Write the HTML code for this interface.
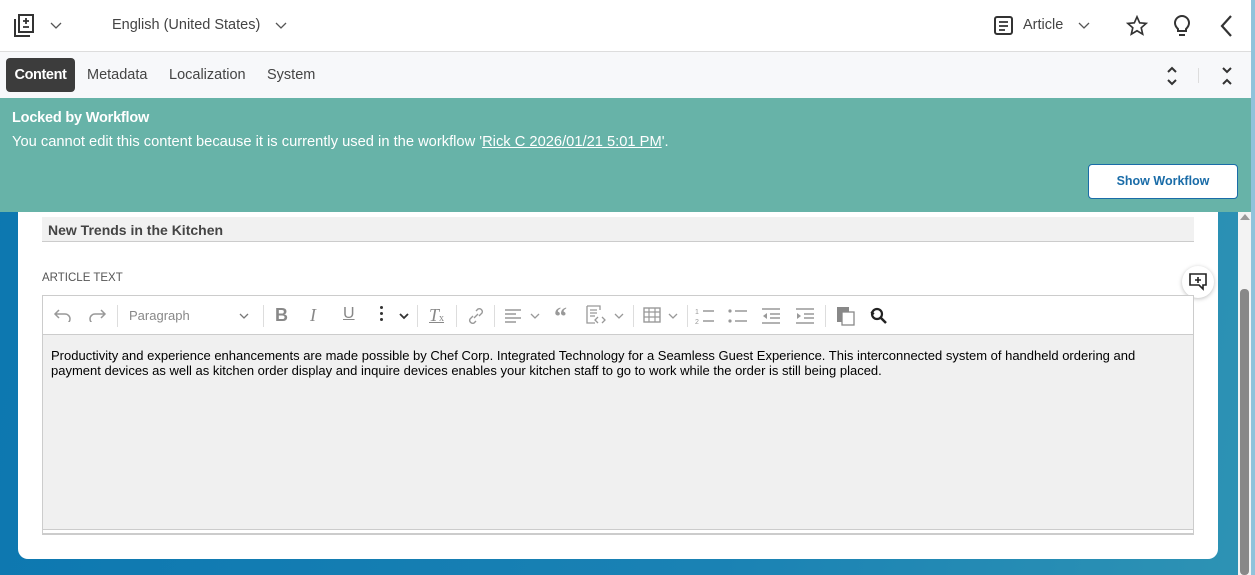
<!DOCTYPE html>
<html><head><meta charset="utf-8"><style>
*{box-sizing:border-box;margin:0;padding:0}
body{width:1255px;height:575px;overflow:hidden;position:relative;font-family:"Liberation Sans",sans-serif;background:linear-gradient(100deg,#0c77b0 0%,#1a82b4 60%,#2e93b4 100%)}
.abs{position:absolute}
.top{left:0;top:0;width:1251px;height:52px;background:#fff;border-bottom:1px solid #ddd}
.tabs{left:0;top:52px;width:1251px;height:46px;background:#f7f8fa}
.banner{left:0;top:98px;width:1251px;height:114px;background:#67b3a8;color:#fff}
.card{left:18px;top:150px;width:1200px;height:409px;background:#fff;border-radius:0 0 10px 10px}
.txt{color:#444;font-size:14.5px}
svg{display:block}
</style></head><body>
<div class="abs" style="right:0;top:0;width:4px;height:575px;background:#8fc3db"></div>
<div class="abs card"></div>
<div class="abs" style="left:1238px;top:212px;width:13px;height:363px;background:#f3f3f3"></div>
<div class="abs" style="left:1240px;top:289px;width:9px;height:286px;background:#888;border-radius:4px"></div>
<div class="abs" style="left:1240px;top:214px;width:0;height:0;border-left:5px solid transparent;border-right:5px solid transparent;border-bottom:6px solid #999"></div>

<div class="abs top">
<svg class="abs" style="left:13px;top:14px" width="22" height="24" viewBox="0 0 22 24"><path d="M2 5v17h15" stroke="#333" stroke-width="2" fill="none"/><rect x="6" y="1" width="14" height="17" stroke="#333" stroke-width="2" fill="none"/><path d="M13 4v6M10 7h6M10 13h6" stroke="#333" stroke-width="1.8"/></svg>
<svg class="abs" style="left:50px;top:22px" width="12" height="8"><path d="M1 1l5 5 5-5" stroke="#555" fill="none" stroke-width="1.3"/></svg>
<div class="abs txt" style="left:112px;top:17px">English (United States)</div>
<svg class="abs" style="left:275px;top:22px" width="12" height="8"><path d="M1 1l5 5 5-5" stroke="#555" fill="none" stroke-width="1.3"/></svg>
<svg class="abs" style="left:994px;top:16px" width="20" height="20"><rect x="1" y="1" width="17" height="17" rx="2" stroke="#333" stroke-width="2" fill="none"/><path d="M5 6h9M5 10h9M5 14h6" stroke="#333" stroke-width="1.8"/></svg>
<div class="abs txt" style="left:1023px;top:17px">Article</div>
<svg class="abs" style="left:1078px;top:22px" width="12" height="8"><path d="M1 1l5 5 5-5" stroke="#555" fill="none" stroke-width="1.3"/></svg>
<svg class="abs" style="left:1126px;top:15px" width="22" height="22" viewBox="0 0 24 24"><path d="M12 2l2.9 6.5 7.1.7-5.4 4.7 1.6 7-6.2-3.7-6.2 3.7 1.6-7L2 9.2l7.1-.7z" stroke="#333" stroke-width="1.8" fill="none"/></svg>
<svg class="abs" style="left:1172px;top:14px" width="20" height="24"><path d="M6 15c-2-2-3-3.5-3-6a7 7 0 0114 0c0 2.5-1 4-3 6v2H6z" stroke="#333" stroke-width="2" fill="none"/><path d="M7 21h6" stroke="#333" stroke-width="2"/></svg>
<svg class="abs" style="left:1219px;top:14px" width="14" height="24"><path d="M12 2L3 12l9 10" stroke="#333" stroke-width="2.2" fill="none"/></svg>
</div>

<div class="abs tabs">
<div class="abs" style="left:6px;top:6px;width:69px;height:34px;background:#3c3c3c;border-radius:4px;color:#fff;font-weight:bold;font-size:14.5px;line-height:34px;text-align:center;letter-spacing:-0.4px">Content</div>
<div class="abs txt" style="left:87px;top:15px">Metadata</div>
<div class="abs txt" style="left:169px;top:15px">Localization</div>
<div class="abs txt" style="left:267px;top:15px">System</div>
<svg class="abs" style="left:1165px;top:13px" width="14" height="22"><path d="M3 7l4-4 4 4M3 15l4 4 4-4" stroke="#333" stroke-width="2" fill="none"/></svg>
<div class="abs" style="left:1198px;top:16px;width:1px;height:15px;background:#ddd"></div>
<svg class="abs" style="left:1220px;top:13px" width="14" height="22"><path d="M3 3l4 4 4-4M3 19l4-4 4 4" stroke="#333" stroke-width="2" fill="none"/></svg>
</div>

<div class="abs banner">
<div class="abs" style="left:12px;top:12px;font-weight:bold;font-size:14.5px;letter-spacing:-0.2px">Locked by Workflow</div>
<div class="abs" style="left:12px;top:36px;font-size:14.7px">You cannot edit this content because it is currently used in the workflow '<u>Rick C 2026/01/21 5:01 PM</u>'.</div>
<div class="abs" style="left:1088px;top:66px;width:150px;height:35px;background:#fff;border:1px solid #1a6ca8;border-radius:4px;color:#1a6ca8;font-weight:bold;font-size:12.5px;line-height:33px;text-align:center">Show Workflow</div>
</div>

<div class="abs" style="left:42px;top:217px;width:1152px;height:25px;background:#f1f1f1;border-bottom:1px solid #ccc;font-weight:bold;color:#444;font-size:14px;padding:5px 6px">New Trends in the Kitchen</div>
<div class="abs" style="left:42px;top:272px;font-size:11.5px;color:#555">ARTICLE TEXT</div>
<div class="abs" style="left:1182px;top:266px;width:32px;height:32px;border-radius:50%;background:#fff;box-shadow:0 1px 4px rgba(0,0,0,.25)"></div>
<svg class="abs" style="left:1189px;top:273px" width="18" height="18"><path d="M1 1h16v11h-3v4l-4-4H1z" stroke="#222" stroke-width="1.6" fill="none"/><path d="M9 4v6M6 7h6" stroke="#222" stroke-width="1.6"/></svg>

<div class="abs" style="left:42px;top:295px;width:1152px;height:240px;border:1px solid #ccc;background:#f0f0f0">
<div class="abs" style="left:0;top:0;width:1150px;height:39px;background:#fff;border-bottom:1px solid #ccc">
<svg class="abs" style="left:10px;top:12px" width="20" height="14"><path d="M6 2L2 6l4 4M2 6h10a5 5 0 010 10" stroke="#999" stroke-width="1.5" fill="none"/></svg>
<svg class="abs" style="left:44px;top:12px" width="20" height="14"><path d="M14 2l4 4-4 4M18 6H8a5 5 0 000 10" stroke="#999" stroke-width="1.5" fill="none"/></svg>
<div class="abs" style="left:74px;top:9px;width:1px;height:22px;background:#ddd"></div>
<div class="abs" style="left:86px;top:12px;font-size:13px;color:#888">Paragraph</div>
<svg class="abs" style="left:196px;top:17px" width="10" height="7"><path d="M1 1l4 4 4-4" stroke="#777" fill="none" stroke-width="1.3"/></svg>
<div class="abs" style="left:220px;top:9px;width:1px;height:22px;background:#ddd"></div>
<div class="abs" style="left:232px;top:9px;font-size:18px;font-weight:bold;color:#888">B</div>
<div class="abs" style="left:267px;top:9px;font-size:18px;font-style:italic;color:#888;font-family:'Liberation Serif',serif">I</div>
<div class="abs" style="left:300px;top:9px;font-size:16px;color:#888;text-decoration:underline">U</div>
<div class="abs" style="left:337px;top:10px;width:3px;height:3px;background:#333;border-radius:50%;box-shadow:0 6px 0 #333,0 12px 0 #333"></div>
<svg class="abs" style="left:356px;top:17px" width="10" height="7"><path d="M1 1l4 4 4-4" stroke="#333" fill="none" stroke-width="1.8"/></svg>
<div class="abs" style="left:374px;top:9px;width:1px;height:22px;background:#ddd"></div>
<div class="abs" style="left:386px;top:9px;font-size:18px;font-style:italic;color:#888;font-family:'Liberation Serif',serif;text-decoration:underline">T<span style="font-size:10px;font-style:normal">x</span></div>
<div class="abs" style="left:413px;top:9px;width:1px;height:22px;background:#ddd"></div>
<svg class="abs" style="left:424px;top:11px" width="18" height="18"><path d="M7 11l4-4M9 4l2-2a3 3 0 014 4l-3 3M9 14l-2 2a3 3 0 01-4-4l3-3" stroke="#999" stroke-width="1.4" fill="none"/></svg>
<div class="abs" style="left:451px;top:9px;width:1px;height:22px;background:#ddd"></div>
<svg class="abs" style="left:462px;top:13px" width="16" height="14"><path d="M0 1h16M0 5h11M0 9h16M0 13h11" stroke="#999" stroke-width="1.4"/></svg>
<svg class="abs" style="left:487px;top:17px" width="10" height="7"><path d="M1 1l4 4 4-4" stroke="#999" fill="none" stroke-width="1.3"/></svg>
<div class="abs" style="left:511px;top:6px;font-size:26px;font-weight:bold;color:#999;font-family:'Liberation Serif',serif">&ldquo;</div>
<svg class="abs" style="left:543px;top:9px" width="22" height="22"><path d="M1 1h13v4M1 1v17h8" stroke="#999" stroke-width="1.3" fill="none"/><path d="M4 5h7M4 8h7M4 11h5M12 12l-3 3 3 3M16 12l3 3-3 3" stroke="#999" stroke-width="1.3" fill="none"/></svg>
<svg class="abs" style="left:571px;top:17px" width="10" height="7"><path d="M1 1l4 4 4-4" stroke="#999" fill="none" stroke-width="1.3"/></svg>
<div class="abs" style="left:590px;top:9px;width:1px;height:22px;background:#ddd"></div>
<svg class="abs" style="left:600px;top:11px" width="18" height="16"><rect x="1" y="1" width="16" height="14" stroke="#999" stroke-width="1.4" fill="none"/><path d="M1 5h16M1 10h16M6 1v14M12 1v14" stroke="#999" stroke-width="1.2"/></svg>
<svg class="abs" style="left:625px;top:17px" width="10" height="7"><path d="M1 1l4 4 4-4" stroke="#999" fill="none" stroke-width="1.3"/></svg>
<div class="abs" style="left:644px;top:9px;width:1px;height:22px;background:#ddd"></div>
<svg class="abs" style="left:652px;top:10px" width="20" height="20"><path d="M8 5h11M8 15h11" stroke="#999" stroke-width="1.5"/><text x="0" y="8" font-size="7" fill="#999">1</text><text x="0" y="18" font-size="7" fill="#999">2</text></svg>
<svg class="abs" style="left:685px;top:12px" width="20" height="16"><circle cx="2" cy="3" r="1.6" fill="#999"/><circle cx="2" cy="13" r="1.6" fill="#999"/><path d="M7 3h12M7 13h12" stroke="#999" stroke-width="1.5"/></svg>
<svg class="abs" style="left:718px;top:12px" width="20" height="16"><path d="M1 1h18M9 6h10M9 10h10M1 15h18" stroke="#999" stroke-width="1.4"/><path d="M6 5l-4 3 4 3z" fill="#999"/></svg>
<svg class="abs" style="left:752px;top:12px" width="20" height="16"><path d="M1 1h18M9 6h10M9 10h10M1 15h18" stroke="#999" stroke-width="1.4"/><path d="M2 5l4 3-4 3z" fill="#999"/></svg>
<div class="abs" style="left:782px;top:9px;width:1px;height:22px;background:#ddd"></div>
<svg class="abs" style="left:793px;top:10px" width="20" height="20"><rect x="1" y="1" width="12" height="15" fill="#888"/><rect x="6" y="6" width="12" height="13" fill="#fff" stroke="#888" stroke-width="1.3"/></svg>
<svg class="abs" style="left:826px;top:10px" width="20" height="20"><circle cx="8" cy="8" r="5" stroke="#222" stroke-width="2.2" fill="none"/><path d="M12 12l5 5" stroke="#222" stroke-width="2.5"/><path d="M2 6l3 2" stroke="#222" stroke-width="2"/></svg>
</div>
<div class="abs" style="left:8px;top:52px;width:1105px;font-size:13px;color:#000;line-height:15px">Productivity and experience enhancements are made possible by Chef Corp. Integrated Technology for a Seamless Guest Experience. This interconnected system of handheld ordering and payment devices as well as kitchen order display and inquire devices enables your kitchen staff to go to work while the order is still being placed.</div>
<div class="abs" style="left:0;top:233px;width:1150px;height:5px;border-top:1px solid #ccc;border-bottom:1px solid #ccc;background:#fff"></div>
</div>
</body></html>
